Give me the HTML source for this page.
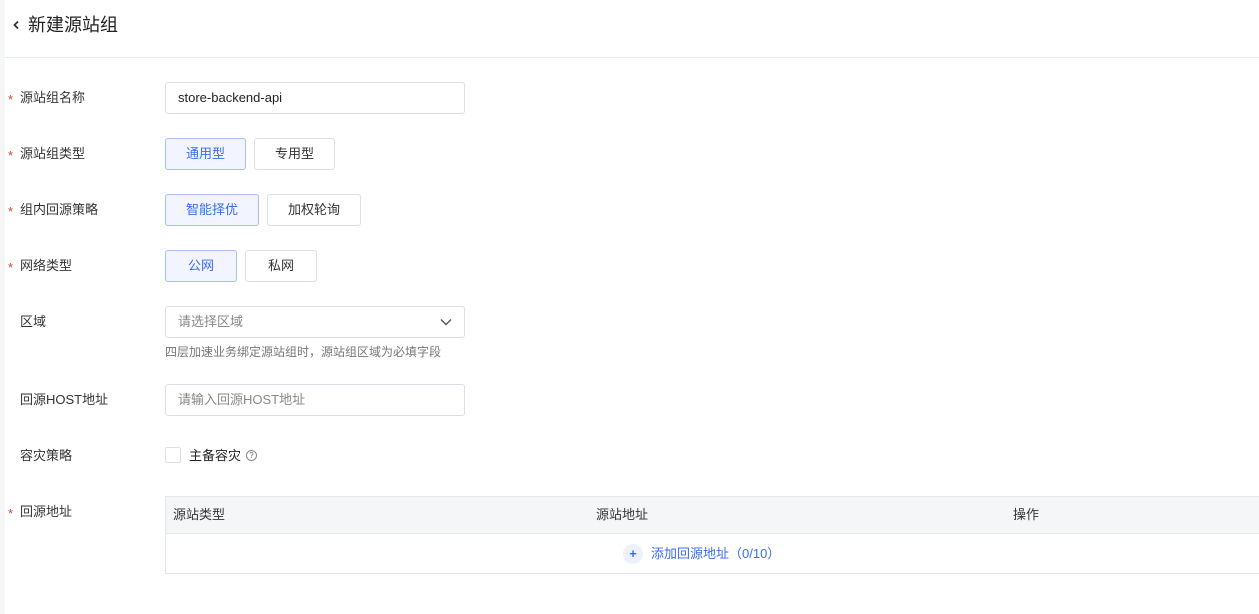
<!DOCTYPE html><html><head><meta charset="utf-8"><style>
*{box-sizing:border-box;margin:0;padding:0}
body{width:1259px;height:614px;background:#fff;font-family:"Liberation Sans","Noto Sans CJK SC",sans-serif;font-size:13px;color:#333;position:relative;overflow:hidden}
.strip{position:absolute;left:0;top:0;width:5px;height:614px;background:#f5f6f8}
.abs{position:absolute}
.title{left:28px;top:12px;font-size:18px;color:#222;line-height:26px}
.hr{left:5px;right:0;top:57px;height:1px;background:#e8eaed}
.lab{left:20px;line-height:20px;color:#333}
.star{position:absolute;left:-12px;top:2px;color:#d4453a}
.inp{left:165px;width:300px;height:32px;border:1px solid #dcdfe6;border-radius:3px;padding-left:12px;line-height:30px}
.btn{height:32px;border:1px solid #dcdfe6;border-radius:3px;text-align:center;line-height:30px;color:#333}
.on{background:#f2f5ff;border-color:#a9bdf5;color:#3a6cf0}
</style></head><body>
<div class="strip"></div>
<svg class="abs" style="left:12px;top:20px" width="8" height="10" viewBox="0 0 8 10"><path d="M6 1.5L2.5 5L6 8.5" fill="none" stroke="#333" stroke-width="1.8"/></svg>
<div class="abs title">新建源站组</div>
<div class="abs hr"></div>

<div class="abs lab" style="top:88px"><span class="star">*</span>源站组名称</div>
<div class="abs inp" style="top:82px;color:#222">store-backend-api</div>

<div class="abs lab" style="top:144px"><span class="star">*</span>源站组类型</div>
<div class="abs btn on" style="left:165px;top:138px;width:81px">通用型</div>
<div class="abs btn" style="left:254px;top:138px;width:81px">专用型</div>

<div class="abs lab" style="top:200px"><span class="star">*</span>组内回源策略</div>
<div class="abs btn on" style="left:165px;top:194px;width:94px">智能择优</div>
<div class="abs btn" style="left:267px;top:194px;width:94px">加权轮询</div>

<div class="abs lab" style="top:256px"><span class="star">*</span>网络类型</div>
<div class="abs btn on" style="left:165px;top:250px;width:72px">公网</div>
<div class="abs btn" style="left:245px;top:250px;width:72px">私网</div>

<div class="abs lab" style="top:312px">区域</div>
<div class="abs inp" style="top:306px;color:#888">请选择区域
<svg style="position:absolute;right:12px;top:10px" width="12" height="10" viewBox="0 0 12 10"><path d="M1 2.5L6 7.5L11 2.5" fill="none" stroke="#555" stroke-width="1.4"/></svg></div>
<div class="abs" style="left:165px;top:343px;font-size:12px;color:#777">四层加速业务绑定源站组时，源站组区域为必填字段</div>

<div class="abs lab" style="top:390px">回源HOST地址</div>
<div class="abs inp" style="top:384px;color:#888">请输入回源HOST地址</div>

<div class="abs lab" style="top:446px">容灾策略</div>
<div class="abs" style="left:165px;top:447px;width:16px;height:16px;border:1px solid #dcdfe6;border-radius:2px"></div>
<div class="abs" style="left:189px;top:446px;line-height:20px;color:#222">主备容灾</div>
<div class="abs" style="left:246px;top:450px;width:11px;height:11px;border:1px solid #888;border-radius:50%;font-size:8px;line-height:9px;text-align:center;color:#666">?</div>

<div class="abs lab" style="top:502px"><span class="star">*</span>回源地址</div>
<div class="abs" style="left:165px;top:496px;width:1100px;height:78px;border:1px solid #e4e6ea">
 <div style="height:37px;background:#f5f6f8;border-bottom:1px solid #e4e6ea;position:relative;line-height:36px">
  <span class="abs" style="left:7px">源站类型</span><span class="abs" style="left:430px">源站地址</span><span class="abs" style="left:847px">操作</span>
 </div>
 <div class="abs" style="left:457px;top:47px;width:20px;height:20px;border-radius:50%;background:#eef1fc;color:#3a6cf0;text-align:center;line-height:19px;font-weight:bold">+</div>
 <div class="abs" style="left:485px;top:47px;line-height:20px;color:#3a6cf0">添加回源地址（0/10）</div>
</div>
</body></html>
